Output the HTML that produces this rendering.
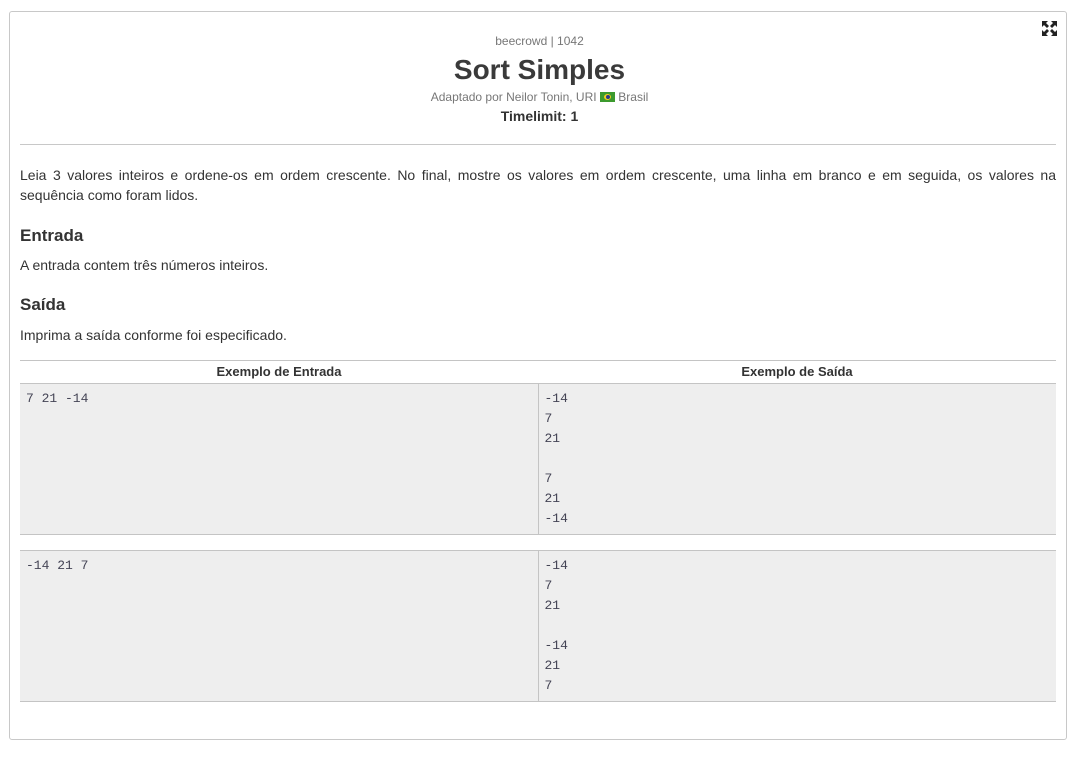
<!DOCTYPE html>
<html><head><meta charset="utf-8"><style>
*{margin:0;padding:0;box-sizing:border-box}
body{width:1079px;height:757px;background:#fff;font-family:"Liberation Sans",sans-serif;color:#333;position:relative;overflow:hidden}
.card{position:absolute;left:9px;top:11px;width:1058px;height:729px;border:1px solid #c8c8c8;border-radius:3px}
.c{position:absolute;left:0;width:1079px;text-align:center;white-space:nowrap}
.t{position:absolute;left:20px;width:1036px;font-size:14px;line-height:20px}
h3{position:absolute;left:20px;font-size:17px;font-weight:bold}
table{position:absolute;left:20px;width:1036px;border-collapse:collapse}
td,th{width:50%;vertical-align:top}
th{font-size:13px;height:23px;line-height:23px;border-top:1px solid #c4c4c4;border-bottom:1px solid #c4c4c4}
td{background:#eee;font-family:"Liberation Mono",monospace;font-size:13px;line-height:20px;padding:5px 6px;color:#445;border-bottom:1px solid #c4c4c4;border-top:1px solid #c4c4c4}
td+td{border-left:1px solid #c4c4c4}
</style></head><body>
<div class="card"></div>
<svg style="position:absolute;left:1042px;top:21px" width="15" height="15" viewBox="0 0 15 15" fill="#222"><path d="M0 0h6l-2 2 3 3-2 2-3-3-2 2zM15 0v6l-2-2-3 3-2-2 3-3-2-2zM0 15v-6l2 2 3-3 2 2-3 3 2 2zM15 15h-6l2-2-3-3 2-2 3 3 2-2z"/></svg>
<div class="c" style="top:34px;font-size:12px;color:#777">beecrowd | 1042</div>
<div class="c" style="top:54px;font-size:28px;font-weight:bold;color:#3a3a3a">Sort Simples</div>
<div class="c" style="top:90px;font-size:12px;color:#777">Adaptado por Neilor Tonin, URI <span style="display:inline-block;width:15px;height:10px;background:#3c9a2e;vertical-align:-1px;position:relative"><span style="position:absolute;left:4px;top:2px;width:7px;height:6px;background:#f2d020;border-radius:50%"></span><span style="position:absolute;left:6px;top:3px;width:4px;height:4px;background:#2a3a8a;border-radius:50%"></span></span> Brasil</div>
<div class="c" style="top:108px;font-size:14px;font-weight:bold">Timelimit: 1</div>
<div style="position:absolute;left:20px;top:144px;width:1036px;height:1px;background:#c8c8c8"></div>
<div class="t" style="top:165px;text-align:justify">Leia 3 valores inteiros e ordene-os em ordem crescente. No final, mostre os valores em ordem crescente, uma linha em branco e em seguida, os valores na sequência como foram lidos.</div>
<h3 style="top:226px">Entrada</h3>
<div class="t" style="top:255px">A entrada contem três números inteiros.</div>
<h3 style="top:295px">Saída</h3>
<div class="t" style="top:325px">Imprima a saída conforme foi especificado.</div>
<table style="top:360px"><tr><th style="height:22px;line-height:22px">Exemplo de Entrada</th><th style="height:22px;line-height:22px">Exemplo de Saída</th></tr>
<tr><td style="height:151px">7 21 -14</td><td>-14<br>7<br>21<br><br>7<br>21<br>-14</td></tr></table>
<table style="top:550px"><tr><td style="height:151px">-14 21 7</td><td>-14<br>7<br>21<br><br>-14<br>21<br>7</td></tr></table>
</body></html>
